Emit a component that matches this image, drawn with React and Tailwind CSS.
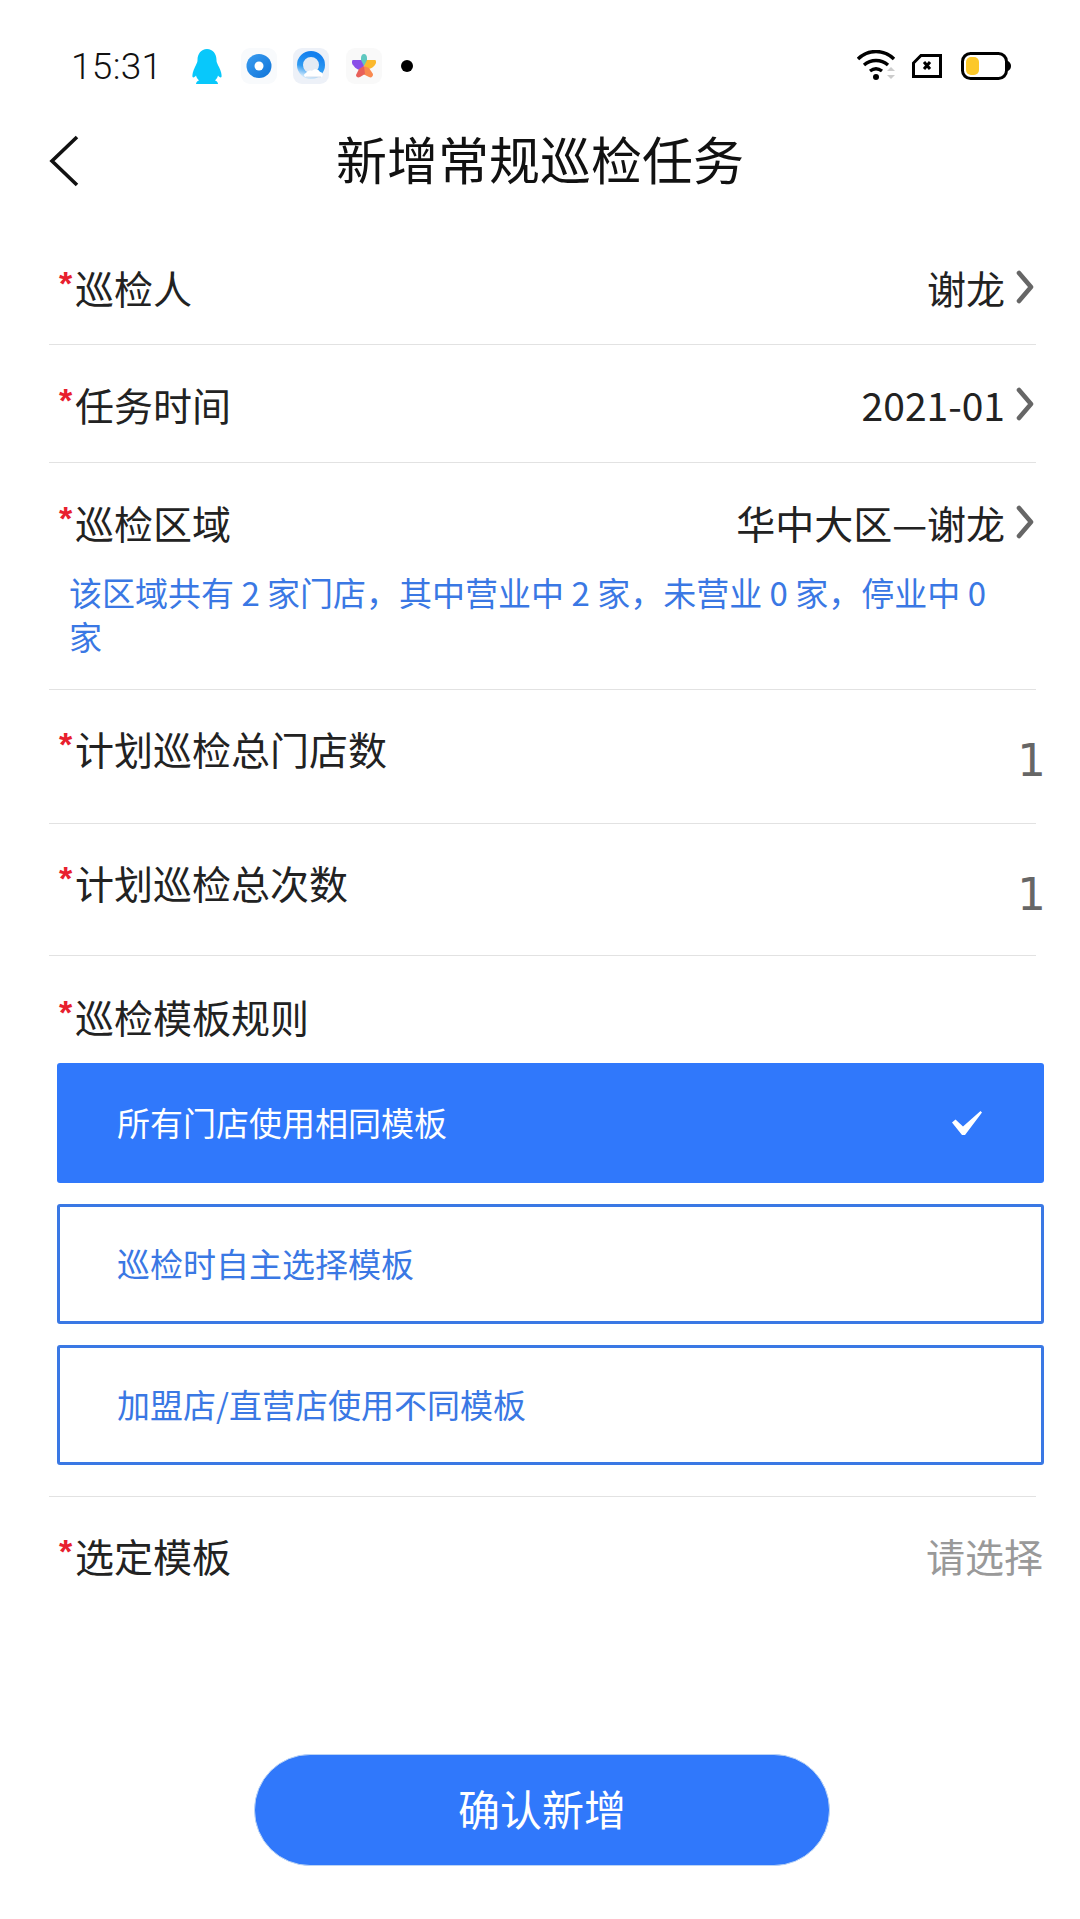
import React from "react";

const CJK = "font-['Noto_Sans_CJK_SC','Noto_Sans',sans-serif]";

function Chevron() {
  return (
    <svg width="18" height="34" viewBox="0 0 18 34" fill="none" className="shrink-0">
      <path d="M3 3l12 14L3 31" stroke="#666" strokeWidth="4.600" strokeLinecap="round" strokeLinejoin="round" />
    </svg>
  );
}

function Label({ children }) {
  return (
    <div className="flex items-start text-[39px] leading-[48px] text-[#222]">
      <span className="w-[17px] pl-[1px] text-[34px] leading-[40px] font-bold text-[#e8202e] font-['Liberation_Sans']">*</span>
      <span>{children}</span>
    </div>
  );
}

function Value({ children }) {
  return (
    <div className="flex items-center gap-[11px] pr-[2px] text-[39px] leading-[48px] text-[#222]">
      <span>{children}</span>
      <Chevron />
    </div>
  );
}

function CountRow({ label, h }) {
  return (
    <div className={`${h} pt-[34px] pl-[9px] flex justify-between items-start border-b border-[#e2e2e2]`}>
      <Label>{label}</Label>
      <span className="mt-[8px] -mr-[10px] text-[45px] leading-[58px] text-[#666] font-['DejaVu_Sans']">1</span>
    </div>
  );
}

function Option({ text, active }) {
  if (active) {
    return (
      <div className="h-[120px] rounded-[3px] bg-[#3078fb] pl-[60px] pr-[62px] flex items-center justify-between text-[33px] text-white">
        <span>{text}</span>
        <svg width="30" height="24" viewBox="0 0 30 24">
          <path d="M0 11.500L3.500 8.500l7.500 7L28.500 0l1.500 1.500L13 24h-3z" fill="#fff" />
        </svg>
      </div>
    );
  }
  return (
    <div className="h-[120px] rounded-[3px] border-[3px] border-[#3a78e4] pl-[57px] flex items-center text-[33px] text-[#3a78e4]">
      <span>{text}</span>
    </div>
  );
}

function StatusBar() {
  return (
    <div className="h-[132px] pl-[71px] pr-[69px] flex items-center justify-between">
      <div className="flex items-center">
        <span className="text-[37px] leading-none font-light text-[#111] tracking-[0.3px] font-['Roboto']">15:31</span>
        {/* QQ */}
        <svg width="30" height="35" viewBox="0 0 30 35" className="ml-[30px]">
          <path d="M15 0c6 0 9.500 5 9.500 11 0 2 .5 3 2.500 7 2 4 3 8 2.500 10-1 1-2.500 0-3.500-1.500-.5 2-1.500 3.500-3 5 2 .5 3 2 3 3.500H4c0-1.500 1-3 3-3.500-1.500-1.500-2.500-3-3-5C3 28 1.500 29 .5 28 0 26 1 22 3 18c2-4 2.500-5 2.500-7C5.500 5 9 0 15 0z" fill="#08c8fb" />
        </svg>
        <svg width="36" height="36" viewBox="0 0 36 36" className="ml-[19px]">
          <defs>
            <linearGradient id="disc" x1="0" y1="0" x2="1" y2="1">
              <stop offset="0" stopColor="#3a9cf0" />
              <stop offset="1" stopColor="#0f74d8" />
            </linearGradient>
          </defs>
          <rect width="36" height="36" rx="9" fill="#f8fafc" />
          <ellipse cx="18" cy="18" rx="12.500" ry="12" fill="url(#disc)" />
          <circle cx="18" cy="18" r="4.500" fill="#fff" />
        </svg>
        <svg width="36" height="36" viewBox="0 0 36 36" className="ml-[16px]">
          <defs>
            <linearGradient id="ring" x1="0.500" y1="0" x2="0.200" y2="1">
              <stop offset="0" stopColor="#1480ee" />
              <stop offset="0.600" stopColor="#2f9bf2" />
              <stop offset="1" stopColor="#c8e4fa" />
            </linearGradient>
          </defs>
          <rect width="36" height="36" rx="9" fill="#edf1f8" />
          <circle cx="18" cy="17" r="11" fill="#e4ebf4" stroke="url(#ring)" strokeWidth="6" />
          <path d="M13 29c-2 0-3-3 0-4 1-2 4-3 6-2 2-3 7-2 8 1 3 0 4 5 1 5z" fill="#fff" />
          <path d="M13 29h15" stroke="#d5dfec" strokeWidth="1" />
        </svg>
        <svg width="36" height="36" viewBox="0 0 36 36" className="ml-[17px]">
          <rect width="36" height="36" rx="9" fill="#f9f9f9" />
          <path d="M18 6c2 0 3 2 3 4v6l-3 2-3-2v-6c0-2 1-4 3-4z" fill="#5fc8c0" />
          <path d="M7 12h8l3 6-4 4c-3 0-7-4-8-7 0-2 0-3 1-3z" fill="#8a4fe8" />
          <path d="M29 12h-8l-3 6 4 3c3 0 7-3 8-6 0-2 0-3-1-3z" fill="#fbb92e" />
          <path d="M18 18l5 2 4 6c0 3-2 4-4 3l-6-3z" fill="#f98a50" />
          <path d="M18 18l-5 3-3 6c0 2 2 3 4 2l5-3z" fill="#e8605a" />
        </svg>
        <span className="ml-[19px] w-[12px] h-[12px] rounded-full bg-black" />
      </div>
      <div className="flex items-center">
        <svg width="40" height="32" viewBox="0 0 40 32" fill="none">
          <path d="M1 9c10-10 26-10 36 0" stroke="#000" strokeWidth="3.400" />
          <path d="M7 15c7-6 17-6 24 0" stroke="#000" strokeWidth="3.400" />
          <path d="M13 21c4-3 8-3 12 0" stroke="#000" strokeWidth="3.400" />
          <circle cx="19" cy="27" r="3" fill="#000" />
          <path d="M30 21l4-4 4 4zM30 25l4 4 4-4z" fill="#ccc" />
        </svg>
        <svg width="30" height="24" viewBox="0 0 30 24" fill="none" className="ml-[15px]">
          <path d="M9 1.500h19.500v21H1.500V9z" stroke="#000" strokeWidth="3" />
          <path d="M12 8l6 7M18 8l-6 7" stroke="#000" strokeWidth="3" />
        </svg>
        <svg width="50" height="28" viewBox="0 0 50 28" fill="none" className="ml-[19px]">
          <rect x="1.500" y="1.500" width="44" height="25" rx="8" stroke="#000" strokeWidth="3" />
          <rect x="5" y="5" width="13" height="18" rx="5" fill="#fcc82a" />
          <path d="M47 9c2 1 3 3 3 5s-1 4-3 5z" fill="#000" />
        </svg>
      </div>
    </div>
  );
}

export default function App() {
  return (
    <div className={`w-[1080px] h-[1919px] bg-white overflow-hidden ${CJK}`}>
      <StatusBar />
      <div className="relative h-[58px] flex items-center justify-center">
        <svg width="30" height="52" viewBox="0 0 30 52" fill="none" className="absolute left-[49px] top-[3px]">
          <path d="M28 2L3 26l25 24" stroke="#111" strokeWidth="3.600" />
        </svg>
        <h1 className="text-[51px] leading-none font-normal text-[#111] -mt-[6px]">新增常规巡检任务</h1>
      </div>

      <div className="mt-[70px] ml-[49px] w-[987px]">
        <div className="h-[85px] pt-[3px] pl-[9px] flex justify-between items-start border-b border-[#e2e2e2]">
          <Label>巡检人</Label>
          <Value>谢龙</Value>
        </div>
        <div className="h-[118px] pt-[35px] pl-[9px] flex justify-between items-start border-b border-[#e2e2e2]">
          <Label>任务时间</Label>
          <Value>2021-01</Value>
        </div>
        <div className="h-[227px] pt-[35px] flex flex-col border-b border-[#e2e2e2]">
          <div className="pl-[9px] flex justify-between items-start">
            <Label>巡检区域</Label>
            <Value>华中大区—谢龙</Value>
          </div>
          <p className="mt-[24px] pl-[20px] pr-[35px] text-[33px] leading-[44px] text-[#3a78e4]">
            该区域共有 2 家门店，其中营业中 2 家，未营业 0 家，停业中 0 家
          </p>
        </div>
        <CountRow label="计划巡检总门店数" h="h-[134px]" />
        <CountRow label="计划巡检总次数" h="h-[132px]" />
      </div>

      <div className="mt-[36px] ml-[58px]">
        <Label>巡检模板规则</Label>
      </div>
      <div className="mt-[23px] ml-[57px] w-[987px] flex flex-col gap-[21px]">
        <Option text="所有门店使用相同模板" active />
        <Option text="巡检时自主选择模板" />
        <Option text="加盟店/直营店使用不同模板" />
      </div>

      <div className="mt-[31px] ml-[49px] w-[987px] border-t border-[#e2e2e2] pt-[34px] pl-[9px] flex justify-between items-start">
        <Label>选定模板</Label>
        <span className="-mr-[7px] text-[39px] leading-[48px] text-[#999]">请选择</span>
      </div>

      <div className="mt-[175px] pl-[4px] flex justify-center">
        <button className="w-[576px] h-[112px] pb-[5px] rounded-full bg-[#3078fb] border border-[#b9d3f5] text-[42px] text-white">
          确认新增
        </button>
      </div>
    </div>
  );
}
